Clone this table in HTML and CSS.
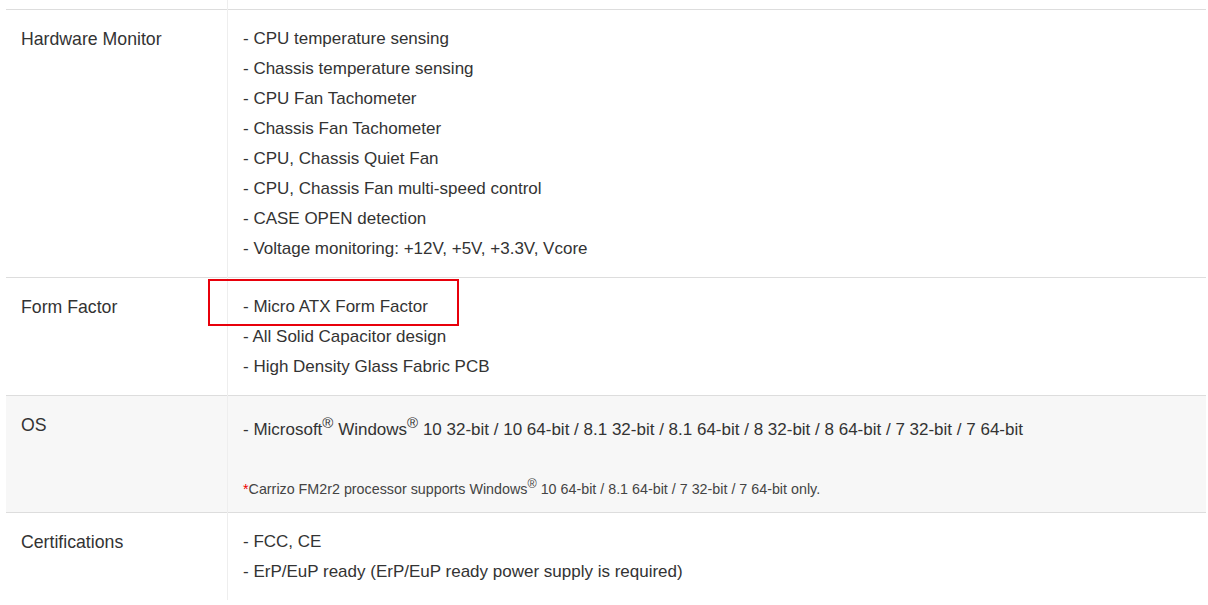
FILE: index.html
```html
<!DOCTYPE html>
<html lang="en">
<head>
    <meta charset="UTF-8">
    <meta name="viewport" content="width=device-width, initial-scale=1.0">
    <title>Specifications</title>
    <link rel="stylesheet" href="styles.css">
</head>
<body>
    <table class="spec-table">
        <tr class="spec-row spec-row-cut">
            <td class="spec-label"></td>
            <td class="spec-value"></td>
        </tr>
        <tr class="spec-row">
            <td class="spec-label">Hardware Monitor</td>
            <td class="spec-value">
                <div class="spec-line">- CPU temperature sensing</div>
                <div class="spec-line">- Chassis temperature sensing</div>
                <div class="spec-line">- CPU Fan Tachometer</div>
                <div class="spec-line">- Chassis Fan Tachometer</div>
                <div class="spec-line">- CPU, Chassis Quiet Fan</div>
                <div class="spec-line">- CPU, Chassis Fan multi-speed control</div>
                <div class="spec-line">- CASE OPEN detection</div>
                <div class="spec-line">- Voltage monitoring: +12V, +5V, +3.3V, Vcore</div>
            </td>
        </tr>
        <tr class="spec-row">
            <td class="spec-label">Form Factor</td>
            <td class="spec-value highlight-cell">
                <div class="highlight-box"></div>
                <div class="spec-line">- Micro ATX Form Factor</div>
                <div class="spec-line">- All Solid Capacitor design</div>
                <div class="spec-line">- High Density Glass Fabric PCB</div>
            </td>
        </tr>
        <tr class="spec-row spec-row-alt">
            <td class="spec-label">OS</td>
            <td class="spec-value">
                <div class="spec-line os-line">- Microsoft<sup>®</sup> Windows<sup>®</sup> 10 32-bit / 10 64-bit / 8.1 32-bit / 8.1 64-bit / 8 32-bit / 8 64-bit / 7 32-bit / 7 64-bit</div>
                <div class="spec-note"><span class="note-mark">*</span>Carrizo FM2r2 processor supports Windows<sup>®</sup> 10 64-bit / 8.1 64-bit / 7 32-bit / 7 64-bit only.</div>
            </td>
        </tr>
        <tr class="spec-row">
            <td class="spec-label">Certifications</td>
            <td class="spec-value">
                <div class="spec-line">- FCC, CE</div>
                <div class="spec-line">- ErP/EuP ready (ErP/EuP ready power supply is required)</div>
            </td>
        </tr>
    </table>
</body>
</html>
```

FILE: styles.css
```css
body {
    margin: 0;
    padding: 0 2px 0 6px;
    background-color: #fff;
    font-family: "Liberation Sans", Arial, sans-serif;
    color: #333;
}

.spec-table {
    width: 1200px;
    border-collapse: collapse;
}

.spec-row td {
    border-top: 1px solid #ddd;
    vertical-align: top;
    padding: 14px 15px 13px;
}

.spec-row-cut td {
    border-top: none;
    padding: 0;
    height: 9px;
}

.spec-row-alt {
    background-color: #f7f7f7;
}

.spec-label {
    width: 191px;
    font-size: 17.7px;
    line-height: 30px;
    border-right: 1px solid #eee;
}

.spec-value {
    font-size: 17px;
    line-height: 30px;
}

.highlight-cell {
    position: relative;
}

.highlight-box {
    position: absolute;
    left: -20px;
    top: 1px;
    width: 247px;
    height: 43px;
    border: 2px solid #e8000b;
}

.os-line {
    padding-top: 5px;
}

.os-line sup {
    font-size: 15px;
    line-height: 0;
}

.spec-note {
    margin-top: 34px;
    font-size: 14.3px;
    line-height: 20px;
    color: #444;
}

.spec-note sup {
    font-size: 12.5px;
    line-height: 0;
}

.note-mark {
    color: #e00;
}
```
